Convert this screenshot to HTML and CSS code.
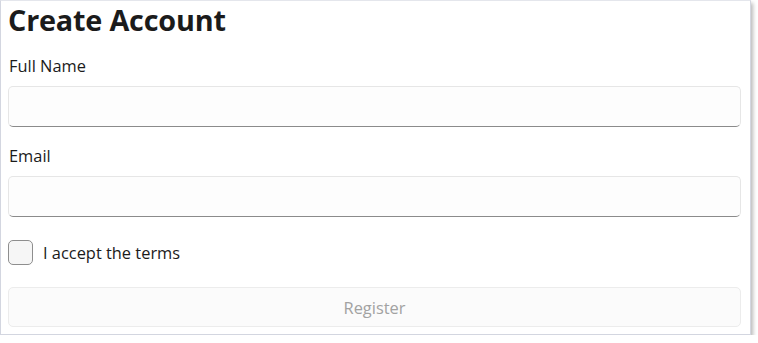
FILE: index.html
```html
<!DOCTYPE html>
<html>
<head>
<meta charset="utf-8">
<link rel="stylesheet" href="styles.css">
</head>
<body>
<div class="window">
  <h1 class="title">Create Account</h1>
  <div class="field">
    <label class="label">Full Name</label>
    <div class="input"></div>
  </div>
  <div class="field">
    <label class="label">Email</label>
    <div class="input"></div>
  </div>
  <div class="check-row">
    <span class="checkbox"></span>
    <span class="check-text">I accept the terms</span>
  </div>
  <div class="button">Register</div>
</div>
</body>
</html>
```
FILE: styles.css
```css
html, body {
  margin: 0;
  padding: 0;
  background: #ffffff;
}
body {
  font-family: "Open Sans", "Noto Sans", sans-serif;
  color: #1b1b1b;
}
.window {
  box-sizing: border-box;
  width: 751px;
  height: 335px;
  border: 1px solid #d3d6e0;
  border-top-color: #e4e6ec;
  background: #ffffff;
  box-shadow: 2px 3px 4px rgba(0,0,0,0.28);
  padding: 0 9px 0 7px;
  display: flex;
  flex-direction: column;
}
.title {
  margin: 0;
  font-size: 28.8px;
  font-weight: 700;
  line-height: 38px;
  height: 38px;
  letter-spacing: -0.2px;
}
.field {
  display: flex;
  flex-direction: column;
}
.label {
  font-size: 16.4px;
  line-height: 22px;
  margin-top: 16px;
  margin-bottom: 9px;
  margin-left: 1px;
}
.field + .field .label {
  margin-top: 18px;
}
.input {
  box-sizing: border-box;
  height: 41px;
  border: 1px solid #e6e6e6;
  border-bottom: 1px solid #8b8b8b;
  border-radius: 5px;
  background: #fdfdfd;
}
.check-row {
  display: flex;
  align-items: center;
  gap: 10px;
  margin-top: 23px;
  height: 25px;
}
.checkbox {
  box-sizing: border-box;
  width: 25px;
  height: 25px;
  border: 1px solid #8e8e8e;
  border-radius: 5px;
  background: #f6f6f6;
}
.check-text {
  font-size: 16.4px;
}
.button {
  box-sizing: border-box;
  margin-top: 22px;
  height: 40px;
  border: 1px solid #ececec;
  border-radius: 5px;
  background: #fbfbfb;
  color: #a2a2a2;
  font-size: 16.4px;
  display: flex;
  align-items: center;
  justify-content: center;
}
```
